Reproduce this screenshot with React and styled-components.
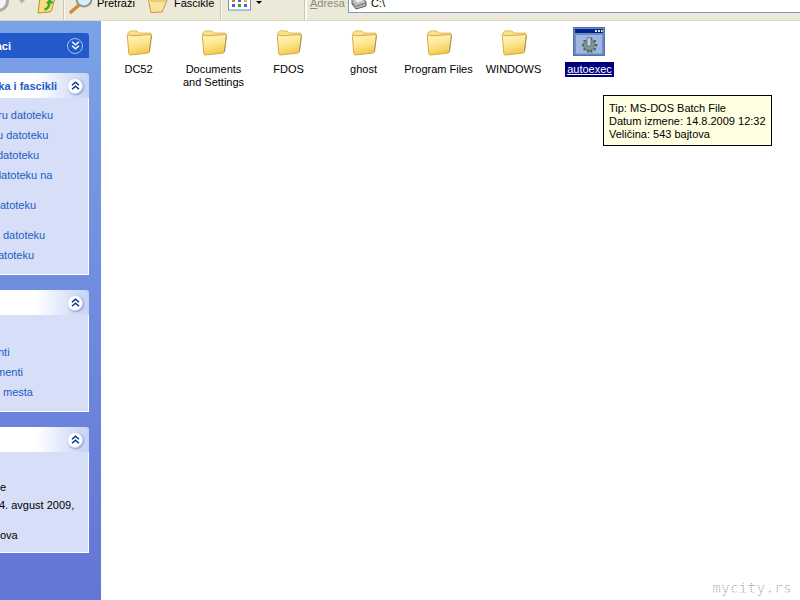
import React from "react";
import styled, { createGlobalStyle } from "styled-components";

const Global = createGlobalStyle`
  html, body { margin: 0; padding: 0; background: #fff; }
  #root { width: 800px; height: 600px; overflow: hidden; }
`;
const Page = styled.div`
  width: 800px; height: 600px; display: flex; flex-direction: column; overflow: hidden;
  font-family: "Liberation Sans", Arial, sans-serif; font-size: 11px; position: relative;
`;
const Toolbar = styled.div`
  height: 21px; flex: none; display: flex; box-sizing: border-box; background: #ece9d8;
  border-bottom: 1px solid #d9d5c3; overflow: hidden;
`;
const ToolGroup = styled.div`
  display: flex; align-items: flex-start; width: ${p => p.$w}px; flex: none;
  padding-left: ${p => p.$pad || 0}px; box-sizing: border-box;
  border-right: 1px solid #c9c6b4; box-shadow: 1px 0 0 #fbfaf5; height: 20px;
`;
const ToolButton = styled.div`
  display: flex; align-items: flex-start; gap: ${p => p.$gap || 0}px; margin-left: ${p => p.$ml || 0}px;
`;
const ToolLabel = styled.span`
  font-size: 11px; line-height: 13px; margin-top: -3px; color: #000; white-space: nowrap;
`;
const Address = styled.div`
  flex: 1; display: flex; align-items: flex-start; padding-left: 3px; gap: 3px; border-left: 1px solid #fff; margin-left: 1px;
`;
const AddressLabel = styled.span`
  font-size: 11px; line-height: 13px; margin-top: -3px; color: #8c8a7c;
`;
const AddressKey = styled.span`text-decoration: underline;`;
const AddressField = styled.div`
  flex: 1; height: 13px; box-sizing: border-box; background: #fff; border-bottom: 1px solid #7f9db9; border-left: 1px solid #7f9db9;
  display: flex; gap: 4px; align-items: flex-start; padding-left: 2px; overflow: hidden;
`;
const AddressText = styled.span`
  font-size: 11px; line-height: 13px; margin-top: -3px; color: #000;
`;
const Body = styled.div`flex: 1; display: flex; min-height: 0;`;
const Sidebar = styled.div`
  width: 101px; flex: none; background: linear-gradient(#7ba2e7, #6375d6); display: flex; flex-direction: column;
  padding-top: 12px; box-sizing: border-box; gap: 15px; overflow: hidden;
`;
const Panel = styled.section`width: 89px; display: flex; flex-direction: column;`;
const PanelHead = styled.div`
  height: 25px; display: flex; align-items: center; justify-content: flex-end; box-sizing: border-box;
  padding-right: 6px; border-top-right-radius: 3px; overflow: hidden;
  background: ${p => p.$dark ? "#225aca" : "linear-gradient(90deg, #fff 40%, #c6d3f7)"};
`;
const PanelTitle = styled.span`
  flex: 1; min-width: 0; white-space: nowrap; font-weight: bold; font-size: 11px; text-align: right;
  overflow: hidden; direction: rtl; padding-right: ${p => p.$end}px; color: ${p => p.$dark ? "#fff" : "#215dc6"};
`;
const Chevron = styled.div`
  width: 16px; height: 16px; flex: none; border-radius: 50%; display: flex; align-items: center; justify-content: center;
  background: ${p => p.$dark ? "#225aca" : "#fff"};
  border: 1px solid ${p => p.$dark ? "#a9c0ee" : "#d5dcf2"}; box-sizing: border-box;
  box-shadow: ${p => p.$dark ? "none" : "1px 1px 2px #8f9fcf"};
`;
const PanelBody = styled.div`
  height: ${p => p.$h}px; background: #d6dff7; box-sizing: border-box; overflow: hidden;
  border-right: 1px solid #fff; border-bottom: 1px solid #fff; padding-top: ${p => p.$pt}px;
`;
const TaskRow = styled.div`
  height: ${p => p.$h || 20}px; line-height: 13px; white-space: nowrap; color: #215dc6; font-size: 11px;
  margin-left: ${p => p.$x || 0}px;
`;
const InfoRow = styled(TaskRow)`color: #000;`;
const Content = styled.main`
  flex: 1; background: #fff; display: flex; align-items: flex-start; padding: 5px 0 0 0; position: relative;
`;
const Item = styled.div`
  width: 75px; flex: none; display: flex; flex-direction: column; align-items: center; color: #000; text-align: center;
  font-size: 11px; line-height: 13px;
`;
const IconBox = styled.div`width: 32px; height: 32px; display: flex; align-items: center; justify-content: center;`;
const ItemLabel = styled.div`
  margin-top: 4px; padding: 1px 2px;
  ${p => p.$sel && "background: #00007f; color: #fff; text-decoration: underline; margin-left: 2px;"}
`;
const Tip = styled.div`
  position: absolute; left: 502px; top: 74px; width: 169px; height: 51px; box-sizing: border-box; border: 1px solid #000;
  background: #ffffe1; padding: 6px 5px; font-size: 11px; line-height: 13px; color: #000; white-space: nowrap;
`;
const Mark = styled.div`
  position: absolute; right: 8px; bottom: 4px; font: 14px/15px "DejaVu Sans Mono", monospace; letter-spacing: 0.4px;
  color: transparent; background: repeating-linear-gradient(#b4b4b4 0 1px, #e4e4e4 1px 2px);
  -webkit-background-clip: text; background-clip: text;
`;

const Folder = () => (
  <svg width="32" height="32" viewBox="0 0 32 32">
    <defs>
      <linearGradient id="f" x1="0" y1="0" x2="0.3" y2="1">
        <stop offset="0" stopColor="#fff6c4" />
        <stop offset="0.55" stopColor="#fde68f" />
        <stop offset="1" stopColor="#f5c94f" />
      </linearGradient>
    </defs>
    <path d="M4.5 10 L5 6.5 L8 4.7 L14 5 L16 7 L27 7 Q28.3 7 28.3 8.5 L28 12 Z" fill="#fbe28a" stroke="#d8b34a" strokeWidth="0.8" />
    <path d="M4.3 9.5 Q4.5 8.5 6 9 Q8 10 11 9.7 L27 8.5 Q28.5 8.5 28.4 10 L26.4 25.5 Q26.2 27 24.8 27.1 L7.5 29 Q6 29.1 5.8 27.6 Z" fill="url(#f)" stroke="#cfa33a" strokeWidth="0.9" />
    <path d="M28.4 10 L26.4 26" stroke="#8d8466" strokeWidth="1" opacity="0.7" />
  </svg>
);
const Batch = () => {
  const teeth = [[14, 11.5], [17, 11.5], [10.5, 14], [20.5, 14], [9, 18], [22, 18], [10.5, 22], [20.5, 22], [14, 24], [17, 24]];
  return (
    <svg width="32" height="32" viewBox="0 0 32 32">
      <rect x="0" y="1" width="32" height="29" fill="#56719f" />
      <rect x="1" y="2" width="30" height="27" fill="#6f8bc0" />
      <rect x="2" y="3" width="28" height="4" fill="#00238c" />
      <rect x="22" y="4" width="2" height="2" fill="#dfe6f5" /><rect x="25" y="4" width="2" height="2" fill="#dfe6f5" /><rect x="28" y="4" width="1.6" height="2" fill="#dfe6f5" />
      <rect x="3" y="9" width="26" height="18.5" fill="#9db6e2" />
      {teeth.map(([x, y]) => <rect key={`${x}-${y}`} x={x} y={y} width="2.4" height="2.4" fill="#52665e" />)}
      <circle cx="16" cy="19" r="5.5" fill="#7f9a86" stroke="#4e6157" strokeWidth="1" strokeDasharray="1.5 1" />
      <rect x="14" y="11.5" width="4" height="8.5" rx="1.5" fill="#c3d0e4" stroke="#55678a" strokeWidth=".8" />
    </svg>
  );
};
const Chevs = ({ down, color }) => (
  <svg width="9" height="9" viewBox="0 0 9 9" fill="none" stroke={color} strokeWidth="1.5">
    {down
      ? <><path d="M1 .8 L4.5 3.8 L8 .8" /><path d="M1 4.8 L4.5 7.8 L8 4.8" /></>
      : <><path d="M1 4.2 L4.5 1.2 L8 4.2" /><path d="M1 8.2 L4.5 5.2 L8 8.2" /></>}
  </svg>
);
const Drive = () => (
  <svg width="16" height="12" viewBox="0 0 16 12">
    <path d="M1 -3 L11 -3 L15 2 L15 6 L5 9 L1 4 Z" fill="#bdbdbd" stroke="#5c5c5c" />
    <path d="M1.5 3 L5 6.5 L15 3" fill="none" stroke="#6d6d6d" />
    <path d="M4 0 L10 -1 L12 1 L6 2.5 Z" fill="#ededed" />
  </svg>
);
const BackBtn = () => (
  <svg width="10" height="14" viewBox="0 0 10 14">
    <circle cx="-2" cy="1" r="11" fill="#a9a9a9" />
    <circle cx="-2" cy="1" r="8" fill="#f4f4f4" />
  </svg>
);
const GreyCaret = () => (
  <svg width="6" height="4" viewBox="0 0 6 4"><path d="M0 0 H6 L3 3.5 Z" fill="#b4b1a2" /></svg>
);
const Up = () => (
  <svg width="18" height="14" viewBox="0 0 18 14">
    <path d="M3 -2 H18 L15 9 Q14.6 12 12 12 L1 13 Z" fill="#f9dd80" stroke="#b4902f" />
    <path d="M7.5 9.5 C11 9 12.5 5 12.5 1 L15.5 3 M12.5 1 L10 3.5" stroke="#3ca52c" strokeWidth="2.4" fill="none" />
  </svg>
);
const Search = () => (
  <svg width="26" height="16" viewBox="0 0 26 16">
    <circle cx="16" cy="-1" r="7.5" fill="#d7ebfa" stroke="#8f949b" strokeWidth="2" />
    <path d="M10.5 5.5 L3 12" stroke="#d0893d" strokeWidth="3.5" strokeLinecap="round" />
  </svg>
);
const Fold = () => (
  <svg width="22" height="14" viewBox="0 0 22 14">
    <path d="M1 -2 L4 12.5 L15 12 L21 -2 Z" fill="#f9e39a" stroke="#c29a3c" />
    <path d="M1 -2 L5 1 L19 1" fill="none" stroke="#d7b257" />
  </svg>
);
const Views = () => (
  <svg width="23" height="11" viewBox="0 0 23 11">
    <rect x=".5" y="-5" width="22" height="15" fill="#fff" stroke="#6f8fc6" />
    <rect x="4" y="-1" width="3" height="3" fill="#e8732a" /><rect x="10" y="-1" width="3" height="3" fill="#3c6cc9" /><rect x="16" y="-1" width="3" height="3" fill="#e8b52a" />
    <rect x="4" y="4" width="3" height="3" fill="#3c6cc9" /><rect x="10" y="4" width="3" height="3" fill="#3aa52e" /><rect x="16" y="4" width="3" height="3" fill="#3c6cc9" />
  </svg>
);
const Caret = styled.span`
  width: 0; height: 0; border-left: 3px solid transparent; border-right: 3px solid transparent; border-top: 3px solid #000; margin-top: 1px;
`;

const names = ["DC52", "Documents and Settings", "FDOS", "ghost", "Program Files", "WINDOWS"];

export default function App() {
  return (
    <Page>
      <Global />
      <Toolbar>
        <ToolGroup $w={64}>
          <BackBtn />
          <ToolButton $ml={9}><GreyCaret /></ToolButton>
          <ToolButton $ml={12}><Up /></ToolButton>
        </ToolGroup>
        <ToolGroup $w={157} $pad={4}>
          <ToolButton $gap={3}><Search /><ToolLabel>Pretraži</ToolLabel></ToolButton>
          <ToolButton $ml={12} $gap={5}><Fold /><ToolLabel>Fascikle</ToolLabel></ToolButton>
        </ToolGroup>
        <ToolGroup $w={84} $pad={7}>
          <ToolButton $gap={5}><Views /><Caret /></ToolButton>
        </ToolGroup>
        <Address>
          <AddressLabel><AddressKey>A</AddressKey>dresa</AddressLabel>
          <AddressField><Drive /><AddressText>C:\</AddressText></AddressField>
        </Address>
      </Toolbar>
      <Body>
        <Sidebar>
          <Panel>
            <PanelHead $dark><PanelTitle $dark $end={56}>aci</PanelTitle><Chevron $dark><Chevs down color="#fff" /></Chevron></PanelHead>
          </Panel>
          <Panel>
            <PanelHead><PanelTitle $end={10}>ka i fascikli</PanelTitle><Chevron><Chevs color="#00339a" /></Chevron></PanelHead>
            <PanelBody $h={177} $pt={11}>
              <TaskRow $x={-2}>ru datoteku</TaskRow>
              <TaskRow $x={-3}>u datoteku</TaskRow>
              <TaskRow $x={-3}>datoteku</TaskRow>
              <TaskRow $x={-5} $h={30}>datoteku na</TaskRow>
              <TaskRow $h={30}>atoteku</TaskRow>
              <TaskRow $x={3}>datoteku</TaskRow>
              <TaskRow $x={-2}>atoteku</TaskRow>
            </PanelBody>
          </Panel>
          <Panel>
            <PanelHead><Chevron><Chevs color="#00339a" /></Chevron></PanelHead>
            <PanelBody $h={97} $pt={31}>
              <TaskRow $x={-2}>nti</TaskRow>
              <TaskRow $x={-4}>menti</TaskRow>
              <TaskRow $x={3}>mesta</TaskRow>
            </PanelBody>
          </Panel>
          <Panel>
            <PanelHead><Chevron><Chevs color="#00339a" /></Chevron></PanelHead>
            <PanelBody $h={101} $pt={29}>
              <InfoRow $h={18}>e</InfoRow>
              <InfoRow $h={30} $x={-1}>4. avgust 2009,</InfoRow>
              <InfoRow>ova</InfoRow>
            </PanelBody>
          </Panel>
        </Sidebar>
        <Content>
          {names.map(n => (
            <Item key={n}><IconBox><Folder /></IconBox><ItemLabel>{n}</ItemLabel></Item>
          ))}
          <Item><IconBox><Batch /></IconBox><ItemLabel $sel>autoexec</ItemLabel></Item>
          <Tip>Tip: MS-DOS Batch File<br />Datum izmene: 14.8.2009 12:32<br />Veličina: 543 bajtova</Tip>
          <Mark>mycity.rs</Mark>
        </Content>
      </Body>
    </Page>
  );
}
